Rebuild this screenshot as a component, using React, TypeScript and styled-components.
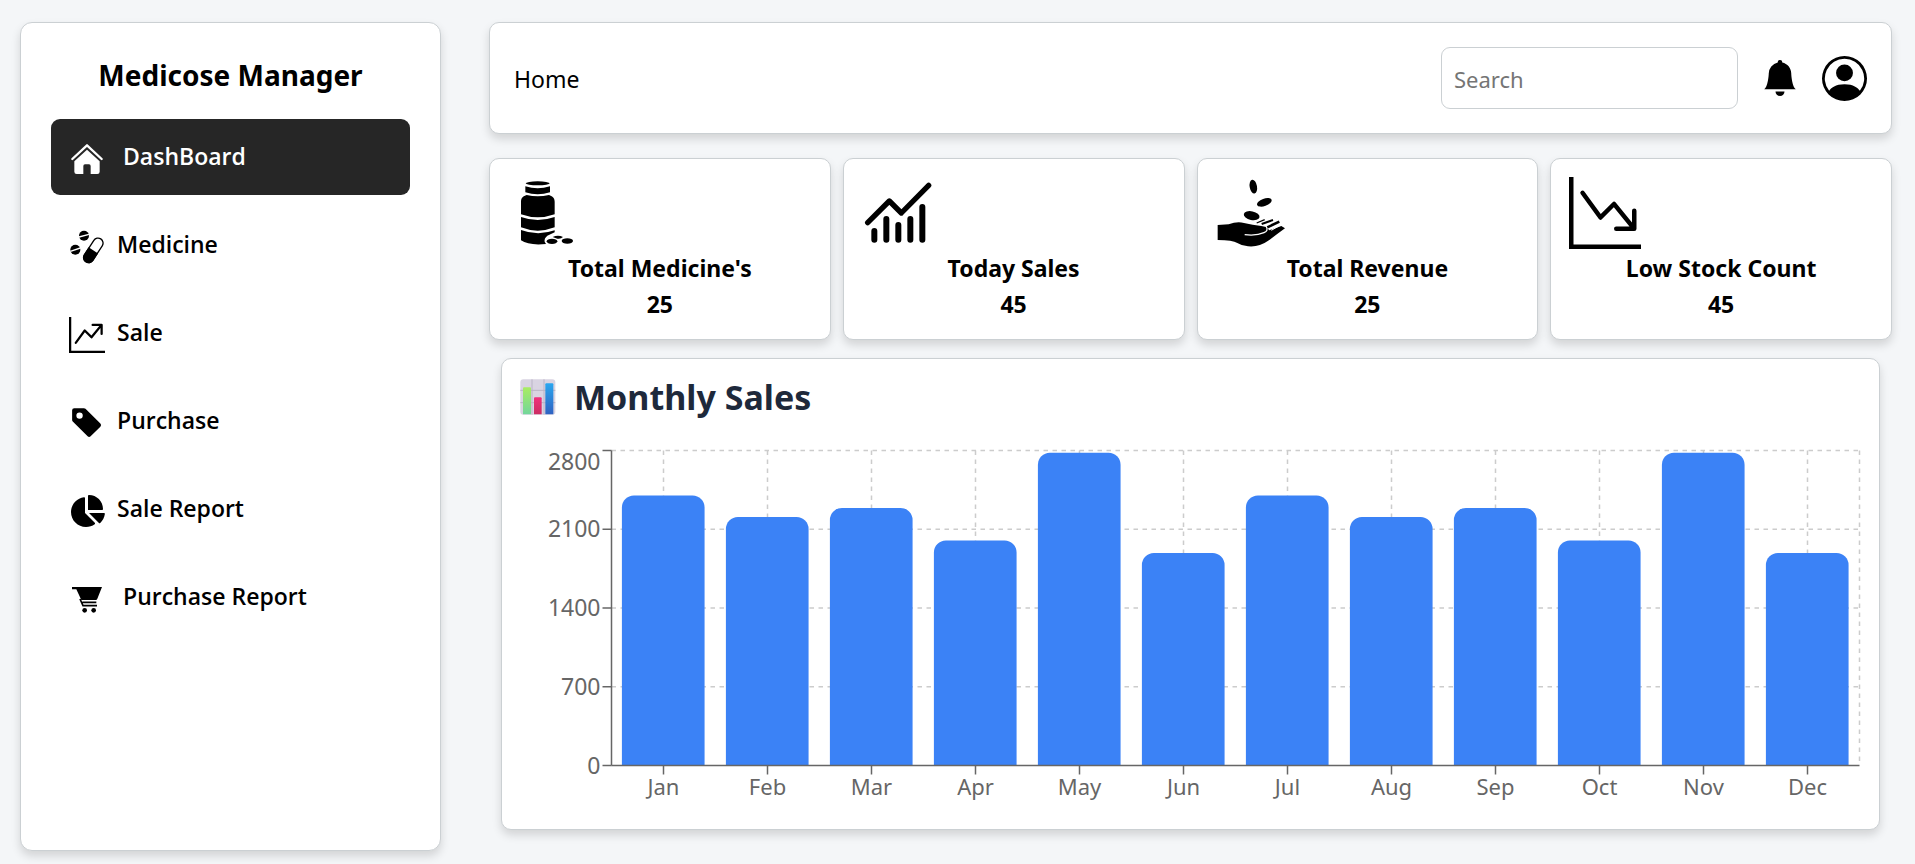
import React, { useLayoutEffect, useRef, useState } from 'react';
import styled, { createGlobalStyle } from 'styled-components';
import {
  BsBellFill,
  BsGraphDownArrow,
  BsGraphUpArrow,
  BsPersonCircle,
  BsTagFill,
} from 'react-icons/bs';
import { FaChartPie } from 'react-icons/fa6';

const GlobalStyle = createGlobalStyle`
  *, *::before, *::after { box-sizing: border-box; }
  body {
    margin: 0;
    background: #f4f6f8;
    color: #000;
    font-family: 'Noto Sans', 'Open Sans', sans-serif;
    font-size: 23px;
  }
`;

const Page = styled.div`
  display: flex;
  gap: 48px;
  min-height: 100vh;
  padding: 22px 23px 13px 20px;
`;

const Panel = styled.section`
  background: #fff;
  border: 1px solid #cbd0d3;
  border-radius: 10px;
  box-shadow: 0 5px 10px rgba(0, 0, 0, 0.14);
`;

const Sidebar = styled(Panel).attrs({ as: 'aside' })`
  flex: 0 0 421px;
  padding: 30px;
  border-radius: 12px;
`;

const Brand = styled.h1`
  margin: 0 0 21px;
  font-size: 28px;
  line-height: 45px;
  font-weight: 700;
  text-align: center;
`;

const NavList = styled.nav`
  display: flex;
  flex-direction: column;
  gap: 12px;
`;

const NavItem = styled.a<{ $active?: boolean; $spaced?: boolean }>`
  display: flex;
  align-items: center;
  gap: ${(p) => (p.$spaced ? 18 : 12)}px;
  height: 76px;
  padding: 0 18px;
  border-radius: 9px;
  font-family: 'Open Sans', 'Noto Sans', sans-serif;
  font-weight: 600;
  text-decoration: none;
  color: ${(p) => (p.$active ? '#fff' : '#000')};
  background: ${(p) => (p.$active ? '#262626' : 'transparent')};
`;

const NavIcon = styled.span`
  display: flex;
  align-items: center;
  justify-content: center;
  width: 36px;
  height: 36px;
  margin-top: 4px;
`;

const NavLabel = styled.span`
  padding-bottom: 2px;
`;

const Main = styled.main`
  flex: 1;
  min-width: 0;
`;

const TopBar = styled(Panel).attrs({ as: 'header' })`
  display: flex;
  align-items: center;
  gap: 24px;
  height: 112px;
  margin-bottom: 24px;
  padding: 0 24px;
`;

const PageName = styled.h2`
  flex: 1;
  margin: 0;
  padding-top: 2px;
  font-size: 23px;
  font-weight: 400;
`;

const SearchBox = styled.input`
  width: 297px;
  height: 62px;
  padding: 2px 12px 0;
  border: 1px solid #cbd0d3;
  border-radius: 9px;
  background: #fff;
  font-family: inherit;
  font-size: 22px;
  color: #000;
  &::placeholder { color: #757575; opacity: 1; }
`;

const IconButton = styled.button`
  display: flex;
  padding: 0;
  border: 0;
  background: none;
  color: #000;
  cursor: pointer;
`;

const StatGrid = styled.div`
  display: grid;
  grid-template-columns: repeat(4, 1fr);
  gap: 12px;
  margin-bottom: 18px;
`;

const StatCard = styled(Panel)`
  padding: 18px 18px 17px;
  text-align: center;
  font-weight: 700;
  line-height: 36px;
  svg { display: block; margin-bottom: 1px; }
`;

const StatText = styled.p`
  margin: 0;
`;

const ChartCard = styled(Panel)`
  margin: 0 12px;
  padding: 18px;
`;

const ChartTitle = styled.h2`
  display: flex;
  align-items: center;
  gap: 18px;
  margin: 0 0 26px;
  font-size: 34px;
  line-height: 40px;
  font-weight: 700;
  color: #1e293b;
`;

const ChartArea = styled.div`
  height: 368px;
  svg { display: block; }
`;

const AxisLabel = styled.text<{ $size: number }>`
  fill: #666;
  font-size: ${(p) => p.$size}px;
`;

const HouseIcon = () => (
  <svg width="36" height="36" viewBox="0 0 108 108" fill="currentColor" aria-hidden="true">
    <path d="M10 54L54 13L98 54" fill="none" stroke="currentColor" strokeWidth="7" strokeLinecap="round" strokeLinejoin="round" />
    <path d="M54 26L92 61V92q0 7-7 7H65V75q0-5-5-5H48q-5 0-5 5V99H23q-7 0-7-7V61Z" />
  </svg>
);

const PillsIcon = () => (
  <svg width="36" height="36" viewBox="0 0 108 108" aria-hidden="true">
    <circle cx="45" cy="20" r="15" />
    <path d="M30 24L60 16" stroke="#fff" strokeWidth="4" />
    <circle cx="19" cy="62" r="15" />
    <path d="M4 67L34 57" stroke="#fff" strokeWidth="4" />
    <g transform="rotate(33 73 64)">
      <rect x="58" y="23" width="30" height="82" rx="15" fill="#fff" stroke="#000" strokeWidth="4" />
      <path d="M56 64H90V90a17 17 0 0 1-34 0Z" />
    </g>
  </svg>
);

const CartIcon = () => (
  <svg width="36" height="36" viewBox="0 0 108 108" aria-hidden="true">
    <path d="M9 18H99L85 53Q84 57 80 57H37L22 25H9Z" />
    <path d="M33 54L42 74H84M40 64H82" fill="none" stroke="#000" strokeWidth="5" />
    <circle cx="47" cy="88" r="7" />
    <circle cx="74" cy="88" r="7" />
  </svg>
);

const BottleIcon = () => (
  <svg width="72" height="72" viewBox="0 0 216 216" aria-hidden="true">
    <ellipse cx="89" cy="19" rx="36" ry="6" />
    <path d="M52 28Q89 40 126 28V46Q89 58 52 46Z" />
    <path d="M39 74C39 62 46 57 56 54Q89 62 123 54C132 57 140 62 140 74V112Q89 130 39 112Z" />
    <path d="M39 120Q89 138 140 120V151Q89 171 39 151Z" />
    <path d="M39 159Q89 178 140 160V166L118 176Q108 184 110 194L114 201Q62 206 39 190Z" />
    <ellipse cx="132" cy="193" rx="16" ry="8" />
    <ellipse cx="178" cy="192" rx="17" ry="8" />
    <path d="M134 180Q150 172 165 180Q158 187 148 185Z" />
  </svg>
);

const TrendIcon = () => (
  <svg width="72" height="72" viewBox="0 0 216 216" fill="none" stroke="#000" strokeLinecap="round" aria-hidden="true">
    <path d="M17 137L82 72L118 108L200 25" strokeWidth="16" strokeLinejoin="round" />
    <path d="M37 162V188M73 126V188M109 144V188M145 126V188M181 90V188" strokeWidth="18" />
  </svg>
);

const RevenueIcon = () => (
  <svg width="72" height="72" viewBox="0 0 216 216" aria-hidden="true">
    <ellipse cx="112" cy="29" rx="11" ry="21" transform="rotate(-10 112 29)" />
    <ellipse cx="145" cy="76" rx="23" ry="11" transform="rotate(-20 145 76)" />
    <ellipse cx="107" cy="116" rx="24" ry="13" transform="rotate(12 107 116)" />
    <path d="M5 144L38 142Q64 132 84 138Q110 144 136 147L150 150L160 160L196 147L207 154Q180 174 154 193Q130 211 96 208Q76 206 64 198Q50 189 5 189Z" />
    <path d="M86 173Q122 177 144 167Q158 161 151 149" fill="none" stroke="#fff" strokeWidth="4" />
    <path d="M166 160L194 144" fill="none" stroke="#fff" strokeWidth="3" />
    <path d="M122 138L146 128" stroke="#000" strokeWidth="4" />
    <path d="M137 141L171 129" stroke="#000" strokeWidth="6" />
    <path d="M154 151L190 134" stroke="#000" strokeWidth="8" />
  </svg>
);

const BarsEmblem = () => (
  <svg width="36" height="36" viewBox="0 0 108 108" aria-hidden="true">
    <defs>
      <linearGradient id="bar-green" x2="0" y2="1">
        <stop stopColor="#a9ec62" />
        <stop offset="1" stopColor="#72d69c" />
      </linearGradient>
      <linearGradient id="bar-pink" x2="0" y2="1">
        <stop stopColor="#f0307c" />
        <stop offset="1" stopColor="#cb2c62" />
      </linearGradient>
      <linearGradient id="bar-blue" x2="0" y2="1">
        <stop stopColor="#2ba7ef" />
        <stop offset="1" stopColor="#2f62c2" />
      </linearGradient>
    </defs>
    <rect x="1" y="1" width="105" height="106" rx="9" fill="#d9d4e2" />
    <path d="M36 1V107M72 1V107M1 34H106M1 71H106" stroke="#bab4c6" strokeWidth="3" />
    <path d="M9 106V28q0-3 3-3h18q3 0 3 3v78Z" fill="url(#bar-green)" />
    <path d="M42 106V58q0-3 3-3h17q3 0 3 3v48Z" fill="url(#bar-pink)" />
    <path d="M76 106V16q0-3 3-3h18q3 0 3 3v90Z" fill="url(#bar-blue)" />
  </svg>
);

const navItems = [
  { label: 'DashBoard', icon: <HouseIcon />, active: true, spaced: true },
  { label: 'Medicine', icon: <PillsIcon /> },
  { label: 'Sale', icon: <BsGraphUpArrow size={36} /> },
  { label: 'Purchase', icon: <BsTagFill size={34} /> },
  { label: 'Sale Report', icon: <FaChartPie size={36} /> },
  { label: 'Purchase Report', icon: <CartIcon />, spaced: true },
];

const stats = [
  { label: "Total Medicine's", value: 25, icon: <BottleIcon /> },
  { label: 'Today Sales', value: 45, icon: <TrendIcon /> },
  { label: 'Total Revenue', value: 25, icon: <RevenueIcon /> },
  { label: 'Low Stock Count', value: 45, icon: <BsGraphDownArrow size={72} /> },
];

const sales = [
  { month: 'Jan', value: 2400 },
  { month: 'Feb', value: 2210 },
  { month: 'Mar', value: 2290 },
  { month: 'Apr', value: 2000 },
  { month: 'May', value: 2780 },
  { month: 'Jun', value: 1890 },
  { month: 'Jul', value: 2400 },
  { month: 'Aug', value: 2210 },
  { month: 'Sep', value: 2290 },
  { month: 'Oct', value: 2000 },
  { month: 'Nov', value: 2780 },
  { month: 'Dec', value: 1890 },
];

const MAX = 2800;
const TICKS = [0, 700, 1400, 2100, 2800];
const TOP = 7.5;
const BOTTOM = 322.5;
const LEFT = 91.5;

function SalesChart() {
  const area = useRef<HTMLDivElement>(null);
  const [width, setWidth] = useState(0);

  useLayoutEffect(() => {
    const node = area.current!;
    const update = () => setWidth(node.clientWidth);
    update();
    const observer = new ResizeObserver(update);
    observer.observe(node);
    return () => observer.disconnect();
  }, []);

  const right = Math.max(width - 1.5, LEFT);
  const step = (right - LEFT) / sales.length;
  const y = (v: number) => BOTTOM - (v / MAX) * (BOTTOM - TOP);
  const barWidth = step * 0.795;
  const r = 12;

  return (
    <ChartArea ref={area}>
      {width > 0 && (
        <svg width={width} height="368" role="img" aria-label="Monthly sales">
          <g stroke="#ccc" strokeWidth="1.5" strokeDasharray="4.5 4.5">
            {TICKS.slice(1).map((t) => (
              <line key={t} x1={LEFT} x2={right} y1={y(t)} y2={y(t)} />
            ))}
            {sales.map((s, i) => (
              <line key={s.month} x1={LEFT + step * (i + 0.5)} x2={LEFT + step * (i + 0.5)} y1={TOP} y2={BOTTOM} />
            ))}
            <line x1={right} x2={right} y1={TOP} y2={BOTTOM} />
          </g>
          <g fill="#3b82f6">
            {sales.map((s, i) => {
              const x = LEFT + step * (i + 0.1);
              const top = y(s.value);
              return (
                <path
                  key={s.month}
                  d={`M${x} ${BOTTOM}V${top + r}a${r} ${r} 0 0 1 ${r} ${-r}h${barWidth - 2 * r}a${r} ${r} 0 0 1 ${r} ${r}V${BOTTOM}Z`}
                />
              );
            })}
          </g>
          <g stroke="#666" strokeWidth="1.5">
            <line x1={LEFT} x2={right} y1={BOTTOM} y2={BOTTOM} />
            <line x1={LEFT} x2={LEFT} y1={TOP} y2={BOTTOM} />
            {TICKS.map((t) => (
              <line key={t} x1={LEFT - 9} x2={LEFT} y1={y(t)} y2={y(t)} />
            ))}
            {sales.map((s, i) => (
              <line key={s.month} x1={LEFT + step * (i + 0.5)} x2={LEFT + step * (i + 0.5)} y1={BOTTOM} y2={BOTTOM + 9} />
            ))}
          </g>
          {TICKS.map((t) => (
            <AxisLabel key={t} $size={23} x={LEFT - 11} y={Math.max(y(t) + 8, 27)} textAnchor="end">
              {t}
            </AxisLabel>
          ))}
          {sales.map((s, i) => (
            <AxisLabel key={s.month} $size={22} x={LEFT + step * (i + 0.5)} y={BOTTOM + 29} textAnchor="middle">
              {s.month}
            </AxisLabel>
          ))}
        </svg>
      )}
    </ChartArea>
  );
}

export default function App() {
  return (
    <>
      <GlobalStyle />
      <Page>
        <Sidebar>
          <Brand>Medicose Manager</Brand>
          <NavList>
            {navItems.map((item) => (
              <NavItem
                key={item.label}
                href="#"
                $active={item.active}
                $spaced={item.spaced}
                aria-current={item.active ? 'page' : undefined}
              >
                <NavIcon>{item.icon}</NavIcon>
                <NavLabel>{item.label}</NavLabel>
              </NavItem>
            ))}
          </NavList>
        </Sidebar>
        <Main>
          <TopBar>
            <PageName>Home</PageName>
            <SearchBox type="search" placeholder="Search" aria-label="Search" />
            <IconButton type="button" aria-label="Notifications">
              <BsBellFill size={36} />
            </IconButton>
            <IconButton type="button" aria-label="Account">
              <BsPersonCircle size={45} />
            </IconButton>
          </TopBar>
          <StatGrid>
            {stats.map((stat) => (
              <StatCard key={stat.label}>
                {stat.icon}
                <StatText>{stat.label}</StatText>
                <StatText>{stat.value}</StatText>
              </StatCard>
            ))}
          </StatGrid>
          <ChartCard>
            <ChartTitle>
              <BarsEmblem />
              Monthly Sales
            </ChartTitle>
            <SalesChart />
          </ChartCard>
        </Main>
      </Page>
    </>
  );
}
